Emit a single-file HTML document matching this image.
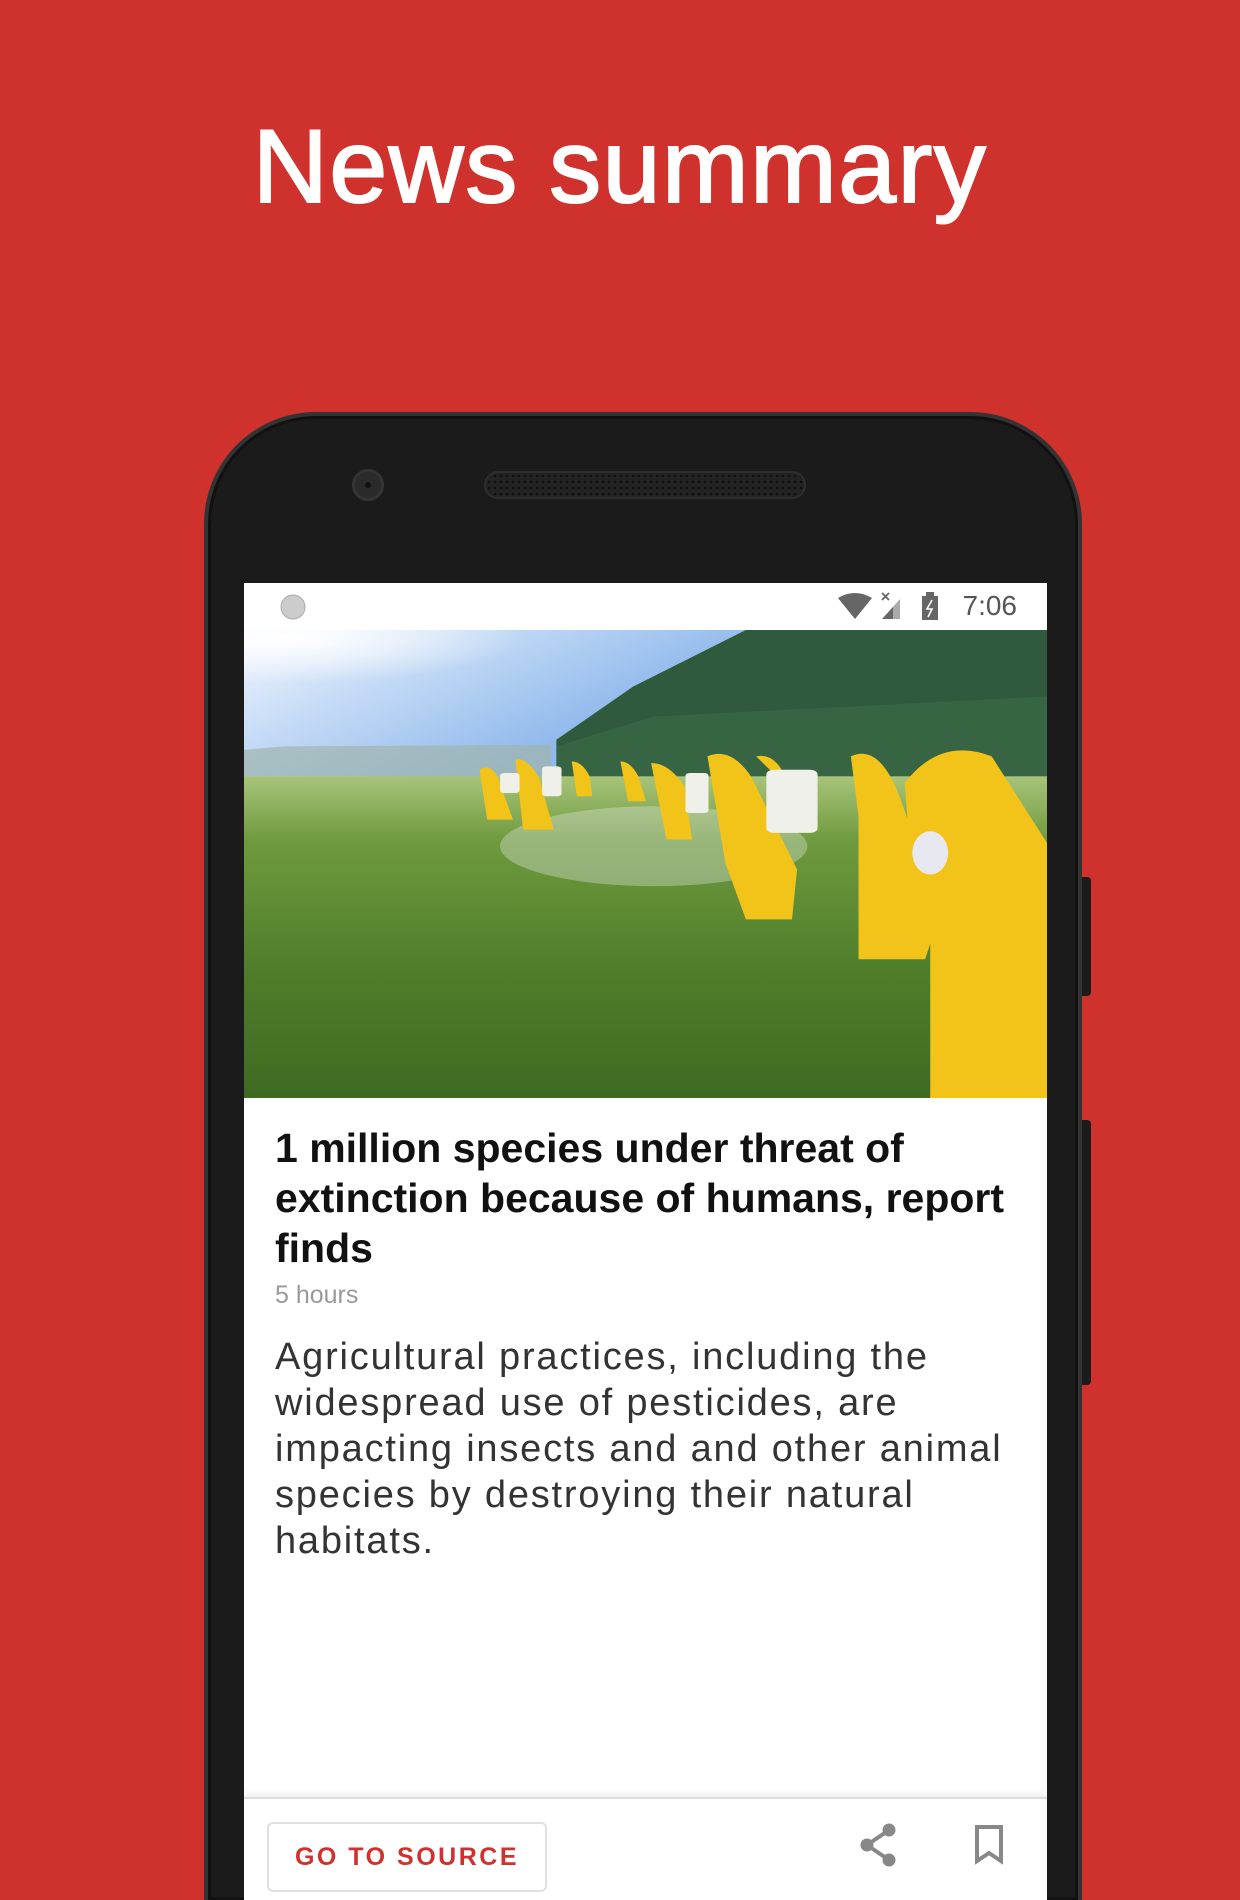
<!DOCTYPE html>
<html><head><meta charset="utf-8"><style>
*{margin:0;padding:0;box-sizing:border-box}
html,body{width:1240px;height:1900px;overflow:hidden;background:#CF312D;font-family:"Liberation Sans",sans-serif}
#wrap{position:relative;width:1240px;height:1900px;overflow:hidden;background:#CF312D}
.title{position:absolute;top:102px;left:0;width:1240px;text-align:center;color:#fff;font-size:104px;line-height:130px;-webkit-text-stroke:2px #fff;letter-spacing:1.5px}
.phone{position:absolute;left:204px;top:412px;width:878px;height:1488px;background:#1b1b1b;border-radius:112px 112px 0 0;border:4px solid #333;border-bottom:none;box-shadow:inset 0 0 0 3px #111}
.btn1{position:absolute;left:1080px;top:877px;width:11px;height:119px;background:#1b1b1b;border-radius:0 4px 4px 0}
.btn2{position:absolute;left:1080px;top:1120px;width:11px;height:265px;background:#1b1b1b;border-radius:0 4px 4px 0}
.cam{position:absolute;left:352px;top:469px;width:32px;height:32px;border-radius:50%;background:#2a2a2a;border:3px solid #353535}
.cam:after{content:"";position:absolute;left:10px;top:10px;width:6px;height:6px;border-radius:50%;background:#111}
.spk{position:absolute;left:484px;top:471px;width:322px;height:28px;border-radius:14px;background:#232323;border:2px solid #2e2e2e;background-image:radial-gradient(#111 1.2px,transparent 1.6px);background-size:6px 6px}
.screen{position:absolute;left:244px;top:583px;width:803px;height:1317px;background:#fff;overflow:hidden}
.status{height:47px;position:relative;color:#666}
.time{position:absolute;right:30px;top:7px;font-size:28px;color:#555}
.img{position:absolute;top:47px;left:0;width:803px;height:468px}
.h{position:absolute;left:31px;top:540px;width:760px;font-size:41px;line-height:50px;font-weight:bold;color:#111}
.t{position:absolute;left:31px;top:698px;font-size:25px;color:#999}
.b{position:absolute;left:31px;top:751px;width:760px;font-size:38px;line-height:46px;color:#333;letter-spacing:1.8px}
.bar{position:absolute;top:1214px;left:0;width:803px;height:103px;border-top:2px solid #ddd;box-shadow:0 -4px 6px rgba(0,0,0,0.06)}
.go{position:absolute;left:23px;top:23px;width:280px;height:70px;border:2px solid #e0e0e0;border-radius:6px;color:#D0312D;font-size:25px;font-weight:bold;letter-spacing:2.5px;text-align:center;line-height:66px}
</style></head><body><div id="wrap">
<div class="title">News summary</div>
<div class="btn1"></div><div class="btn2"></div>
<div class="phone"></div>
<div class="cam"></div><div class="spk"></div>
<div class="screen">
 <div class="status">
  <svg style="position:absolute;left:36px;top:11px" width="26" height="26"><circle cx="13" cy="13" r="12" fill="#ccc" stroke="#aaa"/></svg>
  <svg style="position:absolute;left:594px;top:8px" width="120" height="32">
   <path d="M0 7 Q17 -3 34 7 L17 28 Z" fill="#666"/>
   <path d="M44 28 L62 8 L62 28 Z" fill="#aaa"/><path d="M44 28 L55 16 L55 28 Z" fill="#666"/>
   <path d="M44 2 L51 9 M51 2 L44 9" stroke="#666" stroke-width="1.8"/>
   <rect x="84" y="5" width="16" height="24" fill="#666"/><rect x="88" y="1" width="8" height="5" fill="#666"/>
   <path d="M94 9 L89 18 L94 18 L90 26" stroke="#fff" stroke-width="1.6" fill="none"/>
  </svg>
  <div class="time">7:06</div>
 </div>
 <svg class="img" viewBox="0 0 1568 1407" preserveAspectRatio="none">
  <defs>
   <linearGradient id="sky" x1="0" y1="0" x2="1" y2="0.4"><stop offset="0" stop-color="#f4f6ff"/><stop offset="0.25" stop-color="#c6dcf6"/><stop offset="0.6" stop-color="#8fb8ec"/></linearGradient>
   <linearGradient id="fld" x1="0" y1="0" x2="0" y2="1"><stop offset="0" stop-color="#a8c47a"/><stop offset="0.2" stop-color="#6f9a3e"/><stop offset="0.6" stop-color="#4f7e2a"/><stop offset="1" stop-color="#3f6a22"/></linearGradient>
   <radialGradient id="sun" cx="0.05" cy="0.05" r="0.3"><stop offset="0" stop-color="#fff"/><stop offset="1" stop-color="#fff" stop-opacity="0"/></radialGradient>
  </defs>
  <rect width="1568" height="460" fill="url(#sky)"/>
  <rect width="1568" height="460" fill="url(#sun)"/>
  <path d="M0 360 L80 350 L600 345 L600 440 L0 440 Z" fill="#9fb5ad" opacity="0.7"/>
  <path d="M610 330 L760 170 L980 0 L1568 0 L1568 440 L610 440 Z" fill="#2f5a3e"/>
  <path d="M610 350 L800 260 L1568 200 L1568 440 L610 440 Z" fill="#3d6a48" opacity="0.6"/>
  <rect y="440" width="1568" height="967" fill="url(#fld)"/>
  <ellipse cx="800" cy="650" rx="300" ry="120" fill="#e8ecea" opacity="0.35"/>
  <g fill="#f2c41a">
   <path d="M460 420 Q480 400 495 440 L525 570 L475 570 Z"/>
   <path d="M530 390 Q550 380 575 440 L605 600 L545 600 Z"/>
   <path d="M640 395 Q660 395 675 440 L680 500 L650 500 Z"/>
   <path d="M735 395 Q755 395 770 440 L785 515 L750 515 Z"/>
   <path d="M795 400 Q830 400 860 470 L875 630 L825 630 Z"/>
   <path d="M905 380 Q950 350 990 440 L1080 720 L1070 870 L980 870 L940 700 Z"/>
   <path d="M1000 380 Q1030 370 1050 420 L1040 440 Z"/>
   <path d="M1185 380 Q1240 340 1280 500 L1360 850 L1330 990 L1200 990 L1200 560 Z"/>
   <path d="M1290 460 Q1360 320 1460 380 L1568 640 L1568 1407 L1340 1407 L1340 850 L1300 650 Z"/>
  </g>
  <g fill="#f0f0ea"><rect x="500" y="430" width="38" height="60" rx="8"/><rect x="582" y="410" width="38" height="90" rx="8"/><rect x="862" y="430" width="45" height="120" rx="8"/><rect x="1020" y="420" width="100" height="190" rx="14"/></g>
  <ellipse cx="1340" cy="670" rx="35" ry="65" fill="#e8e8f0"/>
 </svg>
 <div class="h">1 million species under threat of extinction because of humans, report finds</div>
 <div class="t">5 hours</div>
 <div class="b">Agricultural practices, including the widespread use of pesticides, are impacting insects and and other animal species by destroying their natural habitats.</div>
 <div class="bar">
  <div class="go">GO TO SOURCE</div>
  <svg style="position:absolute;left:615px;top:24px" width="40" height="44" viewBox="0 0 40 44"><g fill="#888" stroke="#888"><circle cx="30" cy="7" r="6"/><circle cx="8" cy="22" r="6"/><circle cx="30" cy="37" r="6"/><path d="M30 7 L8 22 L30 37" stroke-width="4" fill="none"/></g></svg>
  <svg style="position:absolute;left:730px;top:26px" width="30" height="40" viewBox="0 0 30 40"><path d="M3 2 H27 V36 L15 28 L3 36 Z" fill="none" stroke="#888" stroke-width="4"/></svg>
 </div>
</div>
</div></body></html>
